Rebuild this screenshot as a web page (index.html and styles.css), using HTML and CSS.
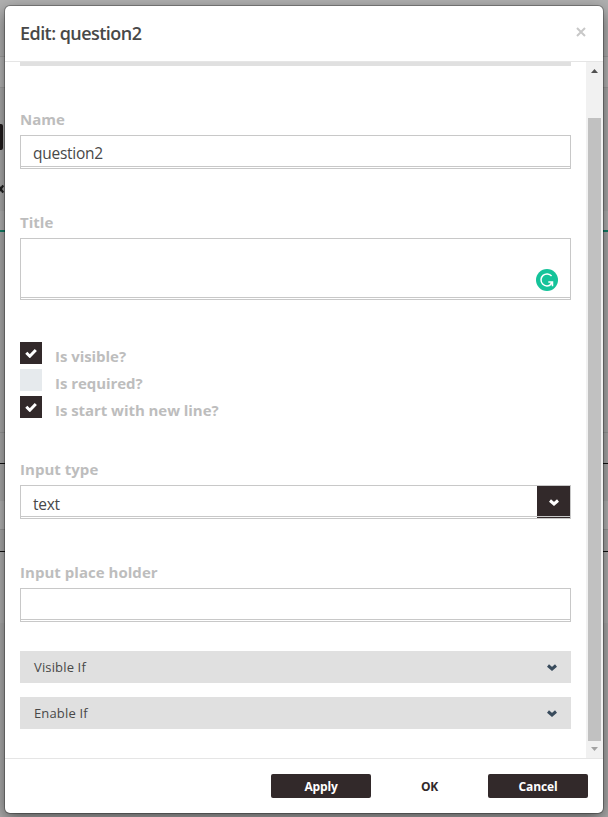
FILE: index.html
```html
<!DOCTYPE html>
<html lang="en">
<head>
<meta charset="utf-8">
<title>Edit: question2</title>
<link rel="stylesheet" href="styles.css">
</head>
<body>
<span class="behind-button"></span>
<svg class="behind-mark" viewBox="0 0 4 12"><path d="M-1 3.500L3.200 9.500M3.200 2.500L-1 8.500"/></svg>
<div class="modal">
  <header class="modal-header">
    <h4 class="modal-title">Edit: question2</h4>
    <svg class="close" viewBox="0 0 10 10"><path d="M1 1l8 8M9 1L1 9"/></svg>
  </header>
  <div class="modal-body">
    <div class="content">
      <div class="panel-end"></div>
      <div class="label">Name</div>
      <div class="field"><span class="value name-value">question2</span></div>
      <div class="label">Title</div>
      <div class="field area">
        <svg class="grammar" viewBox="0 0 22 22"><circle cx="11" cy="11" r="11" fill="#15c39a"/><path d="M15.600 7A6 6 0 1 0 15.200 15.200M12.300 13h4.200v4.200M16.300 13.200L14 15.800" fill="none" stroke="#fff" stroke-width="1.500"/></svg>
      </div>
      <div class="checks">
        <div class="check"><span class="box on"><svg viewBox="0 0 12 10"><path d="M1.300 4.700l3.500 3.500 6-6.200"/></svg></span><span class="check-text">Is visible?</span></div>
        <div class="check"><span class="box"></span><span class="check-text">Is required?</span></div>
        <div class="check"><span class="box on"><svg viewBox="0 0 12 10"><path d="M1.300 4.700l3.500 3.500 6-6.200"/></svg></span><span class="check-text">Is start with new line?</span></div>
      </div>
      <div class="label after-checks">Input type</div>
      <div class="field select"><span class="value">text</span><span class="drop"><svg class="chevron" viewBox="0 0 10 7"><path d="M1 1.500L5 5l4-3.500"/></svg></span></div>
      <div class="label">Input place holder</div>
      <div class="field"></div>
      <div class="accordion"><span>Visible If</span><svg class="chevron" viewBox="0 0 10 7"><path d="M1 1.500L5 5l4-3.500"/></svg></div>
      <div class="accordion"><span>Enable If</span><svg class="chevron" viewBox="0 0 10 7"><path d="M1 1.500L5 5l4-3.500"/></svg></div>
    </div>
    <div class="scrollbar">
      <svg class="up" viewBox="0 0 7 4"><path d="M0 4L3.500 0 7 4z"/></svg>
      <div class="thumb"></div>
      <svg class="down" viewBox="0 0 7 4"><path d="M0 0h7L3.500 4z"/></svg>
    </div>
  </div>
  <footer class="modal-footer">
    <span class="button">Apply</span>
    <span class="button plain">OK</span>
    <span class="button">Cancel</span>
  </footer>
</div>
</body>
</html>
```
FILE: styles.css
```css
* { box-sizing: border-box; }
body {
  margin: 0;
  height: 817px;
  padding: 6px 5px 4px;
  overflow: hidden;
  font-family: "Open Sans", "Noto Sans", sans-serif;
  color: #484848;
  background: linear-gradient(#b0b0b0 0 56px, #a0a0a0 56px 57px, #b5b5b5 57px 87px, #a0a0a0 87px 88px, #ababab 88px 211px, #b2b2b2 211px 230px, #138068 230px 232px, #aaa 232px 432px, #999 432px 433px, #aaa 433px 463px, #111 463px 464px, #aaa 464px 501px, #b4b4b4 501px 529px, #999 529px 530px, #aaa 530px 551px, #111 551px 552px, #b0b0b0 552px 623px, #aaa 623px);
}
.behind-button { position: absolute; left: 0; top: 124px; width: 3px; height: 26px; border-radius: 0 2px 2px 0; background: #211b1c; }
.behind-mark { position: absolute; left: 0; top: 183px; width: 4px; height: 12px; fill: none; stroke: #222; stroke-width: 2.2; }
.modal {
  position: relative;
  height: 807px;
  display: flex;
  flex-direction: column;
  background: #fff;
  border-radius: 5px;
  box-shadow: 0 0 0 1px rgba(0,0,0,.28), 0 5px 15px rgba(0,0,0,.5);
}
.modal-header {
  height: 56px;
  padding: 0 17px 0 15px;
  display: flex;
  justify-content: space-between;
  align-items: center;
  border-bottom: 1px solid #e5e5e5;
}
.modal-title { margin: -1px 0 0; font-size: 18px; line-height: 24px; font-weight: 550; letter-spacing: -.55px; }
.close { width: 10px; height: 10px; margin-top: -4px; fill: none; stroke: #c8c8c8; stroke-width: 2; }
.modal-body { height: 696px; display: flex; justify-content: space-between; overflow: hidden; }
.content { width: 551px; margin-left: 15px; }
.panel-end { height: 4px; background: #e0e0e0; }
.label { height: 24px; margin: 41px 0 4px; font-size: 15px; line-height: 24px; font-weight: 700; letter-spacing: .03px; color: #bdbdbd; white-space: nowrap; }
.field {
  height: 34px;
  display: flex;
  padding-left: 12px;
  border: 1px solid #c8c8c8;
  background: linear-gradient(#c8c8c8, #c8c8c8) 0 calc(100% - 1px) / 100% 1px no-repeat;
}
.value { font-size: 15.5px; line-height: 36px; letter-spacing: -.25px; }
.name-value { line-height: 35px; }
.area { height: 62px; justify-content: flex-end; align-items: flex-end; padding: 0 12px 8px; }
.grammar { width: 22px; height: 22px; }
.checks { display: flex; flex-direction: column; gap: 5px; margin-top: 42px; }
.check { display: flex; height: 22px; gap: 13px; }
.box { width: 22px; height: 22px; display: flex; justify-content: center; align-items: center; background: #e6eaed; }
.box.on { background: #32292a; }
.box svg { width: 12px; height: 10px; fill: none; stroke: #fff; stroke-width: 3; }
.check-text { font-size: 15px; line-height: 28px; font-weight: 700; letter-spacing: -.05px; color: #bdbdbd; white-space: nowrap; }
.label.after-checks { margin-top: 39px; }
.select { justify-content: space-between; }
.drop { width: 33px; height: 32px; display: flex; justify-content: center; align-items: center; background: linear-gradient(#c8c8c8, #c8c8c8) 0 30px / 100% 1px no-repeat #32292a; }
.chevron { width: 10px; height: 7px; fill: none; stroke: #394b5c; stroke-width: 3; }
.drop .chevron { stroke: #fff; }
.accordion {
  height: 32px;
  margin-top: 14px;
  padding: 0 14px;
  display: flex;
  justify-content: space-between;
  align-items: center;
  font-size: 13px;
  letter-spacing: .15px;
  background: #e0e0e0;
}
.field + .accordion { margin-top: 29px; }
.scrollbar { width: 17px; padding: 7px 2px; display: flex; flex-direction: column; align-items: center; background: #f1f1f1; }
.scrollbar svg { width: 7px; height: 4px; }
.up { fill: #505050; }
.down { fill: #a3a3a3; margin-top: 6px; }
.thumb { width: 13px; height: 623px; margin-top: 45px; background: #c1c1c1; }
.modal-footer { height: 55px; padding: 15px 15px 0; display: flex; justify-content: flex-end; border-top: 1px solid #e5e5e5; }
.button { width: 100px; height: 24px; border-radius: 2px; background: #32292a; color: #fff; font-size: 12px; line-height: 25px; font-weight: 700; letter-spacing: -.15px; text-align: center; }
.plain { margin: 0 8.5px; background: none; color: #32292a; }
```
